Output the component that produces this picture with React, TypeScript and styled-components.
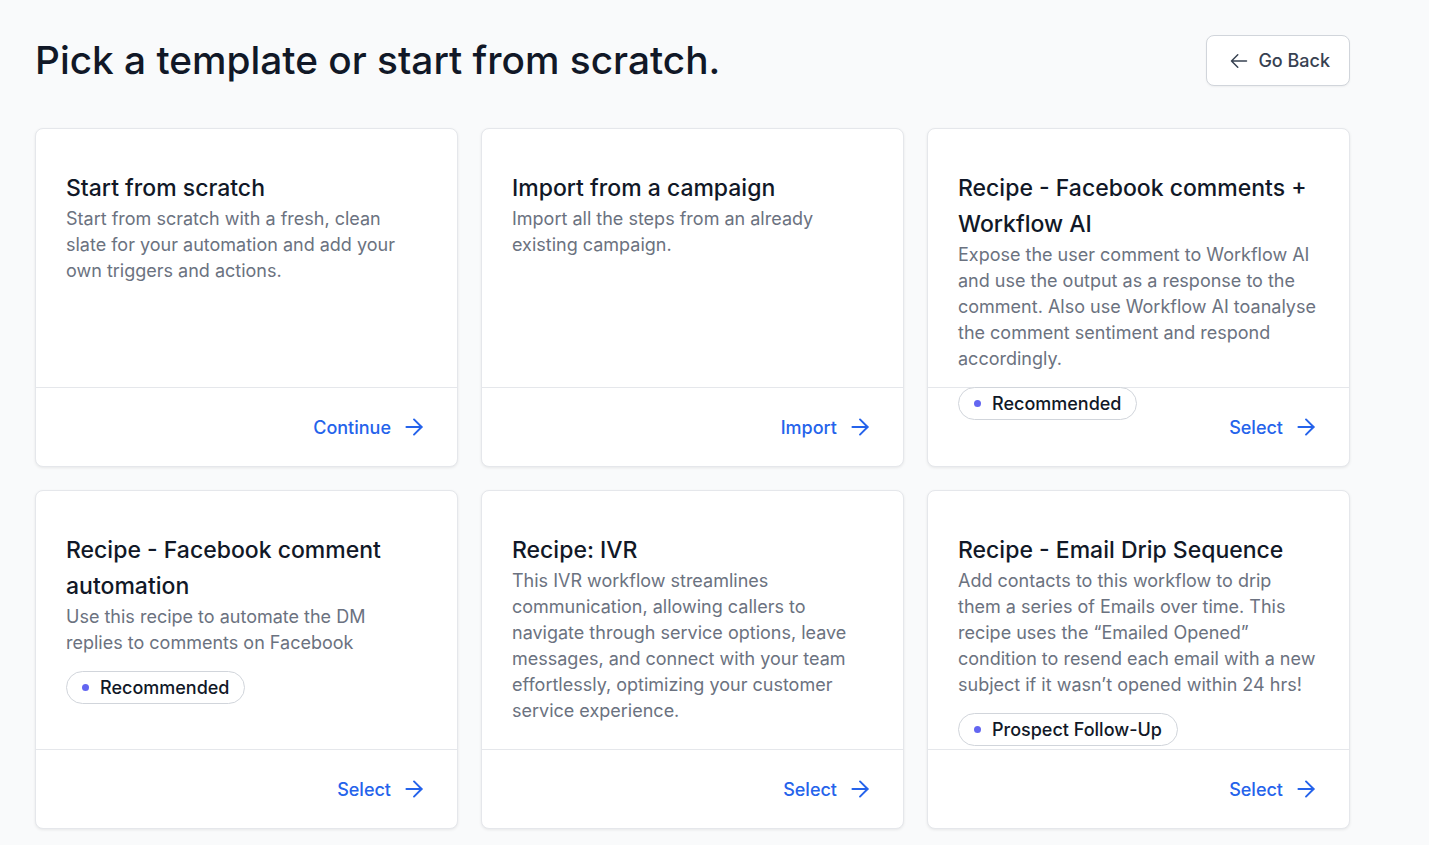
import styled, { createGlobalStyle } from "styled-components";
import { ArrowRight } from "lucide-react";

const GlobalStyle = createGlobalStyle`
  body {
    margin: 0;
    background: #f9fafb;
    font-family: Inter, "Noto Sans", sans-serif;
    color: #111827;
  }
`;

interface Template {
  title: string;
  description: string;
  action: string;
  badge?: string;
}

const templates: Template[] = [
  {
    title: "Start from scratch",
    description:
      "Start from scratch with a fresh, clean slate for your automation and add your own triggers and actions.",
    action: "Continue",
  },
  {
    title: "Import from a campaign",
    description: "Import all the steps from an already existing campaign.",
    action: "Import",
  },
  {
    title: "Recipe - Facebook comments + Workflow AI",
    description:
      "Expose the user comment to Workflow AI and use the output as a response to the comment. Also use Workflow AI toanalyse the comment sentiment and respond accordingly.",
    action: "Select",
    badge: "Recommended",
  },
  {
    title: "Recipe - Facebook comment automation",
    description:
      "Use this recipe to automate the DM replies to comments on Facebook",
    action: "Select",
    badge: "Recommended",
  },
  {
    title: "Recipe: IVR",
    description:
      "This IVR workflow streamlines communication, allowing callers to navigate through service options, leave messages, and connect with your team effortlessly, optimizing your customer service experience.",
    action: "Select",
  },
  {
    title: "Recipe - Email Drip Sequence",
    description:
      "Add contacts to this workflow to drip them a series of Emails over time. This recipe uses the \u201cEmailed Opened\u201d condition to resend each email with a new subject if it wasn\u2019t opened within 24 hrs!",
    action: "Select",
    badge: "Prospect Follow-Up",
  },
];

function BackArrow() {
  return (
    <svg
      width="20"
      height="20"
      viewBox="0 0 24 24"
      fill="none"
      stroke="currentColor"
      strokeWidth={1.8}
      strokeLinecap="round"
      strokeLinejoin="round"
    >
      <path d="M10.5 19.5 3 12m0 0 7.5-7.5M3 12h18" />
    </svg>
  );
}

export default function App() {
  return (
    <>
      <GlobalStyle />
      <Page>
        <Header>
          <Heading>Pick a template or start from scratch.</Heading>
          <BackButton>
            <BackArrow />
            Go Back
          </BackButton>
        </Header>
        <Grid>
          {templates.map((t) => (
            <Card key={t.title}>
              <CardBody>
                <CardTitle>{t.title}</CardTitle>
                <CardText>{t.description}</CardText>
                {t.badge && (
                  <Badge>
                    <Dot />
                    {t.badge}
                  </Badge>
                )}
              </CardBody>
              <CardFooter>
                <ActionLink href="#">
                  {t.action}
                  <ArrowRight size={26} strokeWidth={1.8} />
                </ActionLink>
              </CardFooter>
            </Card>
          ))}
        </Grid>
      </Page>
    </>
  );
}

const Page = styled.div`
  padding: 35px 79px 40px 35px;
`;

const Header = styled.div`
  display: flex;
  align-items: center;
  justify-content: space-between;
  height: 51px;
  margin-bottom: 42px;
`;

const Heading = styled.h1`
  margin: 0;
  font-size: 38.8px;
  line-height: 1.2;
  font-weight: 500;
  color: #111827;
`;

const BackButton = styled.button`
  display: flex;
  align-items: center;
  gap: 9px;
  box-sizing: border-box;
  height: 51px;
  padding: 0 19px 0 22px;
  background: #fff;
  border: 1px solid #d1d5db;
  border-radius: 8px;
  box-shadow: 0 1px 2px rgba(0, 0, 0, 0.05);
  font-family: inherit;
  font-size: 18px;
  font-weight: 500;
  color: #374151;
  cursor: pointer;
`;

const Grid = styled.div`
  display: grid;
  grid-template-columns: repeat(3, 1fr);
  column-gap: 23px;
  row-gap: 23px;
`;

const Card = styled.div`
  box-sizing: border-box;
  height: 339px;
  display: flex;
  flex-direction: column;
  background: #fff;
  border: 1px solid #e5e7eb;
  border-radius: 8px;
  box-shadow: 0 1px 3px rgba(0, 0, 0, 0.08);
`;

const CardBody = styled.div`
  height: 259px;
  box-sizing: border-box;
  padding: 41px 32px 0 30px;
  border-bottom: 1px solid #e5e7eb;
`;

const CardTitle = styled.h3`
  margin: 0;
  font-size: 23px;
  line-height: 36px;
  font-weight: 500;
  color: #111827;
`;

const CardText = styled.p`
  margin: 0;
  font-size: 18px;
  line-height: 26px;
  color: #6b7280;
`;

const Badge = styled.span`
  display: inline-flex;
  align-items: center;
  gap: 11px;
  box-sizing: border-box;
  margin-top: 15px;
  height: 33px;
  padding: 0 15px;
  border: 1px solid #d1d5db;
  border-radius: 999px;
  background: #fff;
  font-size: 18px;
  font-weight: 500;
  color: #111827;
`;

const Dot = styled.span`
  width: 7px;
  height: 7px;
  border-radius: 50%;
  background: #6366f1;
`;

const CardFooter = styled.div`
  flex: 1;
  display: flex;
  align-items: center;
  justify-content: flex-end;
  padding: 0 30px;
`;

const ActionLink = styled.a`
  display: inline-flex;
  align-items: center;
  gap: 10px;
  font-size: 18px;
  font-weight: 500;
  color: #2563eb;
  text-decoration: none;
`;
